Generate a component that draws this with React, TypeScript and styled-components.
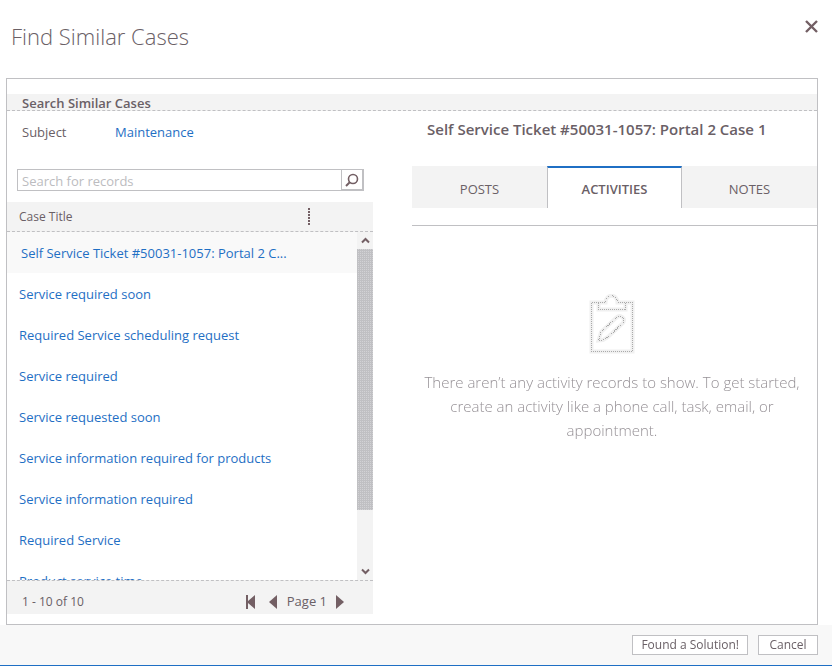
import React, { useRef, useState } from "react";
import styled, { createGlobalStyle } from "styled-components";

const color = {
  text: "#6a6066",
  link: "#1f6fc4",
  line: "#c0c0c3",
  band: "#f3f3f3",
  faint: "#f9f9f9",
  mark: "#735f64",
};

const GlobalStyle = createGlobalStyle`
  * { box-sizing: border-box; }
  body { margin: 0; background: #fff; color: ${color.text}; font: 13px/20px "Open Sans", "Noto Sans", sans-serif; }
  button, input { font: inherit; color: inherit; }
  button { margin: 0; padding: 0; border: 0; background: none; cursor: pointer; }
  a { color: ${color.link}; text-decoration: none; }
  a:hover { text-decoration: underline; }
  h1, h2, p { margin: 0; }
`;

const Dialog = styled.div`
  display: flex;
  flex-direction: column;
  height: 100vh;
  min-height: 480px;
`;

const DialogHeader = styled.header`
  display: flex;
  justify-content: space-between;
  align-items: flex-start;
  flex: none;
  height: 78px;
  padding: 20px 14px 0 11px;
`;

const DialogTitle = styled.h1`
  font-size: 22px;
  line-height: 32px;
  font-weight: 300;
`;

const IconButton = styled.button`
  display: flex;
  align-items: center;
  justify-content: center;
`;

const Frame = styled.main`
  display: flex;
  flex-direction: column;
  flex: 1;
  min-height: 0;
  margin: 0 14px 0 6px;
  padding-top: 15px;
  border: 1px solid ${color.line};
`;

const SectionTitle = styled.h2`
  flex: none;
  height: 17px;
  padding-left: 15px;
  background: ${color.band};
  border-bottom: 1px dashed ${color.line};
  font-size: 13px;
  line-height: 18px;
  font-weight: 600;
`;

const Columns = styled.div`
  display: grid;
  grid-template-columns: minmax(0, 366fr) minmax(0, 405fr);
  grid-template-rows: minmax(0, 1fr);
  column-gap: 39px;
  flex: 1;
  min-height: 0;
`;

const SearchPane = styled.section`
  display: flex;
  flex-direction: column;
  min-height: 0;
  padding-bottom: 10px;
`;

const SubjectRow = styled.div`
  display: grid;
  grid-template-columns: 93px 1fr;
  flex: none;
  padding: 11px 15px 0;
`;

const SearchBox = styled.form`
  display: flex;
  flex: none;
  height: 22px;
  margin: 27px 9px 11px 10px;
  border: 1px solid ${color.line};
`;

const SearchInput = styled.input`
  flex: 1;
  min-width: 0;
  padding: 2px 4px 0;
  border: 0;
  outline: 0;
  &::placeholder { color: #bcbcc0; opacity: 1; }
`;

const SearchButton = styled(IconButton)`
  width: 22px;
  border: 1px solid ${color.line};
  border-width: 0 1px 1px;
`;

const CaseGrid = styled.div`
  display: grid;
  grid-template-columns: minmax(0, 1fr) 16px;
  grid-template-rows: 30px minmax(0, 1fr);
  flex: 1;
  min-height: 0;
`;

const CaseTable = styled.table`
  display: contents;
`;

const CaseHead = styled.thead`
  display: block;
  grid-column: 1 / -1;
  background: ${color.band};
  border-bottom: 1px dashed ${color.line};
  tr { display: flex; align-items: center; height: 29px; }
`;

const HeadCell = styled.th`
  display: flex;
  align-items: center;
  justify-content: space-between;
  width: 83%;
  padding-left: 12px;
  font-size: 12px;
  font-weight: 400;
`;

const ResizeGrip = styled.span`
  width: 2px;
  height: 18px;
  background: repeating-linear-gradient(${color.mark} 0 2px, transparent 2px 3px);
`;

const CaseBody = styled.tbody`
  display: block;
  overflow-y: scroll;
  scrollbar-width: none;
`;

const CaseRow = styled.tr<{ $selected?: boolean }>`
  display: flex;
  align-items: center;
  height: 41px;
  background: ${(p) => (p.$selected ? color.faint : "#fff")};
  td { padding: 0 0 0 ${(p) => (p.$selected ? 14 : 12)}px; white-space: nowrap; }
`;

const Scrollbar = styled.div`
  display: flex;
  flex-direction: column;
  background: ${color.band};
`;

const ScrollButton = styled(IconButton)`
  flex: none;
  height: 17px;
`;

const Track = styled.div`
  flex: 1;
  min-height: 0;
`;

const Thumb = styled.div`
  height: 83%;
  background: conic-gradient(#d2d2d5 25%, ${color.line} 0) 0 0 / 2px 2px;
`;

const Pager = styled.nav`
  display: flex;
  align-items: center;
  justify-content: space-between;
  flex: none;
  height: 34px;
  padding: 8px 29px 0 15px;
  background: ${color.band};
  border-top: 1px dashed ${color.line};
`;

const PagerCount = styled.span`
  font-size: 12px;
`;

const PagerControls = styled.div`
  display: flex;
  align-items: center;
`;

const PageLabel = styled.span`
  padding: 0 9px 2px 10px;
`;

const FirstButton = styled(IconButton)`
  margin-right: 13px;
`;

const DetailPane = styled.section`
  min-width: 0;
`;

const CaseHeading = styled.h2`
  padding: 8px 0 0 15px;
  font-size: 15px;
  line-height: 20px;
  font-weight: 600;
`;

const TabList = styled.div`
  display: grid;
  grid-template-columns: repeat(3, 1fr);
  margin-top: 27px;
  padding-bottom: 17px;
  border-bottom: 1px solid ${color.line};
`;

const Tab = styled.button<{ $active: boolean }>`
  height: 42px;
  padding-top: 4px;
  background: ${(p) => (p.$active ? "#fff" : color.band)};
  border: 0 solid ${color.line};
  ${(p) => p.$active && `
    padding-top: 2px;
    border-width: 2px 1px 0;
    border-top-color: ${color.link};
    font-weight: 600;
  `}
`;

const EmptyState = styled.div`
  display: flex;
  flex-direction: column;
  align-items: center;
  padding: 68px 10px 0 5px;
  color: #969196;
  text-align: center;
`;

const EmptyText = styled.p`
  margin-top: 15px;
  font-size: 15px;
  line-height: 24px;
  font-weight: 300;
`;

const DialogFooter = styled.footer`
  display: flex;
  align-items: center;
  justify-content: flex-end;
  gap: 10px;
  flex: none;
  height: 41px;
  padding-right: 14px;
  background: #f8f8f8;
  border-bottom: 1px solid ${color.link};
`;

const ActionButton = styled.button`
  min-width: 60px;
  height: 20px;
  padding: 0 8px;
  background: #fff;
  border: 1px solid ${color.line};
  font-size: 12px;
  line-height: 18px;
`;

const ClipboardIcon = () => {
  const outline =
    "M2.5 8.5H16.5C17 -0.5 28 -0.5 28.5 8.5H43.5V57.5H2.5Z M9.5 8.5V15.5H36.5V8.5 M9.5 46.5L12 38L28 23C31 20 37 24 34 29L19 43L14 46Z";
  return (
    <svg width="46" height="61" viewBox="0 0 46 61" fill="none" aria-hidden="true">
      <path d={outline} stroke="#f0f0f0" strokeWidth="4" />
      <path d={outline} stroke="#aaa" strokeWidth="1" strokeDasharray="1 1" shapeRendering="crispEdges" />
    </svg>
  );
};

const cases = [
  "Self Service Ticket #50031-1057: Portal 2 C...",
  "Service required soon",
  "Required Service scheduling request",
  "Service required",
  "Service requested soon",
  "Service information required for products",
  "Service information required",
  "Required Service",
  "Product service time",
];

const tabs = ["POSTS", "ACTIVITIES", "NOTES"];

export default function App() {
  const [activeTab, setActiveTab] = useState("ACTIVITIES");
  const body = useRef<HTMLTableSectionElement>(null);
  const scroll = (rows: number) => body.current?.scrollBy({ top: rows * 41 });

  return (
    <Dialog role="dialog" aria-labelledby="dialog-title">
      <GlobalStyle />
      <DialogHeader>
        <DialogTitle id="dialog-title">Find Similar Cases</DialogTitle>
        <IconButton aria-label="Close">
          <svg width="13" height="13" viewBox="0 0 13 13" stroke={color.mark} strokeWidth="2.4">
            <path d="M1 1L12 12M12 1L1 12" />
          </svg>
        </IconButton>
      </DialogHeader>

      <Frame>
        <SectionTitle>Search Similar Cases</SectionTitle>
        <Columns>
          <SearchPane>
            <SubjectRow>
              <span>Subject</span>
              <a href="#maintenance">Maintenance</a>
            </SubjectRow>
            <SearchBox onSubmit={(e) => e.preventDefault()}>
              <SearchInput aria-label="Search for records" placeholder="Search for records" />
              <SearchButton type="submit" aria-label="Search">
                <svg width="14" height="14" viewBox="0 0 14 14" fill="none" stroke={color.mark}>
                  <circle cx="8" cy="6" r="4.5" strokeWidth="1.6" />
                  <path d="M5 9L1 13" strokeWidth="2" />
                </svg>
              </SearchButton>
            </SearchBox>

            <CaseGrid>
              <CaseTable>
                <CaseHead>
                  <tr>
                    <HeadCell scope="col">
                      Case Title
                      <ResizeGrip />
                    </HeadCell>
                  </tr>
                </CaseHead>
                <CaseBody ref={body}>
                  {cases.map((title, i) => (
                    <CaseRow key={title} $selected={i === 0}>
                      <td>
                        <a href={`#case-${i + 1}`}>{title}</a>
                      </td>
                    </CaseRow>
                  ))}
                </CaseBody>
              </CaseTable>
              <Scrollbar>
                <ScrollButton aria-label="Scroll up" onClick={() => scroll(-1)}>
                  <svg width="9" height="7" viewBox="0 0 9 7" fill="none" stroke={color.mark} strokeWidth="2">
                    <path d="M1 5.5L4.5 2L8 5.5" />
                  </svg>
                </ScrollButton>
                <Track>
                  <Thumb />
                </Track>
                <ScrollButton aria-label="Scroll down" onClick={() => scroll(1)}>
                  <svg width="9" height="7" viewBox="0 0 9 7" fill="none" stroke={color.mark} strokeWidth="2">
                    <path d="M1 1.5L4.5 5L8 1.5" />
                  </svg>
                </ScrollButton>
              </Scrollbar>
            </CaseGrid>

            <Pager aria-label="Pages">
              <PagerCount>1 - 10 of 10</PagerCount>
              <PagerControls>
                <FirstButton aria-label="First page">
                  <svg width="10" height="14" viewBox="0 0 10 14" fill={color.mark}>
                    <path d="M0 0H2V6L9 0V14L2 8V14H0Z" />
                  </svg>
                </FirstButton>
                <IconButton aria-label="Previous page">
                  <svg width="8" height="14" viewBox="0 0 8 14" fill={color.mark}>
                    <path d="M8 0V14L0 7Z" />
                  </svg>
                </IconButton>
                <PageLabel>Page 1</PageLabel>
                <IconButton aria-label="Next page">
                  <svg width="8" height="14" viewBox="0 0 8 14" fill={color.mark}>
                    <path d="M0 0V14L8 7Z" />
                  </svg>
                </IconButton>
              </PagerControls>
            </Pager>
          </SearchPane>

          <DetailPane>
            <CaseHeading>Self Service Ticket #50031-1057: Portal 2 Case 1</CaseHeading>
            <TabList role="tablist">
              {tabs.map((name) => (
                <Tab
                  key={name}
                  role="tab"
                  aria-selected={name === activeTab}
                  $active={name === activeTab}
                  onClick={() => setActiveTab(name)}
                >
                  {name}
                </Tab>
              ))}
            </TabList>
            <EmptyState>
              <ClipboardIcon />
              <EmptyText>
                There aren’t any activity records to show. To get started, create an activity like a
                phone call, task, email, or appointment.
              </EmptyText>
            </EmptyState>
          </DetailPane>
        </Columns>
      </Frame>

      <DialogFooter>
        <ActionButton>Found a Solution!</ActionButton>
        <ActionButton>Cancel</ActionButton>
      </DialogFooter>
    </Dialog>
  );
}
